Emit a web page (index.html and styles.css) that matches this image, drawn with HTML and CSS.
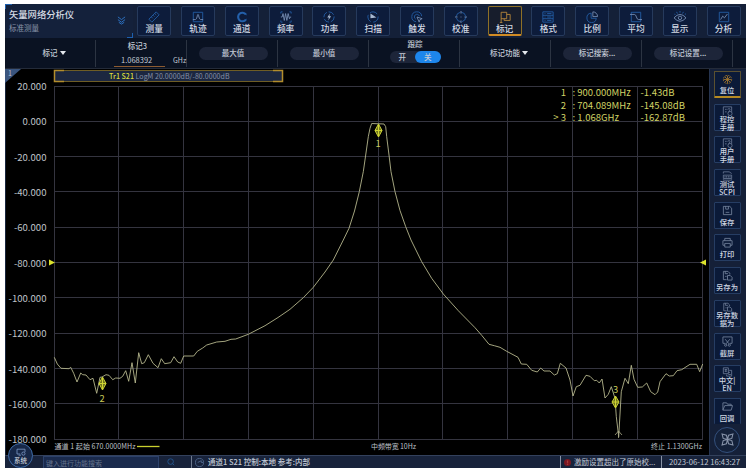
FILE: index.html
```html
<!DOCTYPE html>
<html lang="zh-CN">
<head>
    <meta charset="UTF-8">
    <meta name="viewport" content="width=device-width, initial-scale=1.0">
    <title>矢量网络分析仪</title>
    <link rel="stylesheet" href="styles.css">
</head>
<body>
    <div class="screen">
        <!-- Main menu -->
        <header class="top-bar">
            <div class="app-title">
                <div class="title-text">
                    <h1>矢量网络分析仪</h1>
                    <p>标准测量</p>
                </div>
                <svg class="chevrons" viewBox="0 0 10 10"><path d="M1 1l4 3 4-3M1 4l4 3 4-3M2 7l3 2 3-2"/></svg>
            </div>
            <nav class="menu">
                <button class="menu-btn"><svg viewBox="0 0 14 14"><path d="M1 9.500L9.500 1l3.500 3.500L4.500 13zM4 7l1.500 1.500M6 5l1.500 1.500M8 3l1.500 1.500"/></svg>测量</button>
                <button class="menu-btn"><svg viewBox="0 0 14 14"><path d="M1.500 1.500h11v11h-11z"/><path class="light" d="M1 10h3c2 0 2-6 3-6s1 6 3 6h3"/></svg>轨迹</button>
                <button class="menu-btn"><svg viewBox="0 0 14 14"><path class="thick" d="M11.500 4A5 5 0 1 0 11.500 10"/><path d="M9.500 2.500l3 2M9.500 11.500l3-2"/></svg>通道</button>
                <button class="menu-btn"><svg viewBox="0 0 14 14"><path d="M1 3V1h2M11 1h2v2M13 11v2h-2M3 13H1v-2"/><path class="light" d="M1 7h1.500l1-4 1.500 8 1.500-8L8 11l1.500-8 1.500 6 1-2h1"/></svg>频率</button>
                <button class="menu-btn"><svg viewBox="0 0 14 14"><circle cx="7" cy="7" r="6" stroke-dasharray="7 2"/><path class="solid" d="M8 3L5 7.500h2L6 11l3.500-5H7.500z"/></svg>功率</button>
                <button class="menu-btn"><svg viewBox="0 0 14 14"><circle cx="7" cy="7" r="6" stroke-dasharray="9 3"/><path class="solid" d="M4 3l7 4.500-7 1z"/></svg>扫描</button>
                <button class="menu-btn"><svg viewBox="0 0 14 14"><path d="M6 12.500A5.800 5.800 0 1 1 12.500 6M5.500 9.500A3 3 0 1 1 9.800 6"/><path class="light" d="M7 7l6 2-2.500 1L9.500 13z"/></svg>触发</button>
                <button class="menu-btn"><svg viewBox="0 0 14 14"><circle cx="7" cy="7" r="5.500" stroke-dasharray="7 1.600"/><path class="light" d="M7 0v3M7 11v3M0 7h3M11 7h3M6.500 7h1"/></svg>校准</button>
                <button class="menu-btn active"><svg viewBox="0 0 14 14"><path d="M1 13.500h3M2.500 13.500V1.500H9V9H2.500M9 4h4v7H6V9"/></svg>标记</button>
                <button class="menu-btn"><svg viewBox="0 0 14 14"><path d="M1 1h12v12H1zM1 5h12M1 9h12M3 3h1M6 3h5M3 7h1M6 7h5M3 11h1M6 11h5"/></svg>格式</button>
                <button class="menu-btn"><svg viewBox="0 0 14 14"><path d="M6 2.500A5.500 5.500 0 1 0 12 8.500H6z"/><path class="light" d="M8 1v5.500h5.500A5.500 5.500 0 0 0 8 1z"/></svg>比例</button>
                <button class="menu-btn"><svg viewBox="0 0 14 14"><path d="M1.500 1.500h11v11h-11z"/><path class="light" d="M0 4h5c3 0 2 6 5 6h4"/></svg>平均</button>
                <button class="menu-btn"><svg viewBox="0 0 14 14"><path class="light" d="M0 8q7-8 14 0-7 8-14 0z"/><circle class="light" cx="7" cy="8" r="2"/><path d="M7 0v2M3 1l1 2M11 1l-1 2M0 3l1.500 1.500M14 3l-1.500 1.500"/></svg>显示</button>
                <button class="menu-btn"><svg viewBox="0 0 14 14"><path d="M1.500 1.500h11v11h-11z"/><path class="light" d="M3 10l2.500-4 2 2L11 3.500"/></svg>分析</button>
            </nav>
        </header>

        <!-- Marker toolbar -->
        <section class="tool-bar">
            <div class="tool"><span>标记<i class="caret"></i></span></div>
            <div class="tool field">
                <label>标记3</label>
                <div class="value"><b>1.068392</b><em>GHz</em></div>
            </div>
            <div class="tool"><button class="pill">最大值</button></div>
            <div class="tool"><button class="pill">最小值</button></div>
            <div class="tool track">
                <label>跟踪</label>
                <div class="switch"><span>开</span><span class="on">关</span></div>
            </div>
            <div class="tool function"><span>标记功能<i class="caret"></i></span></div>
            <div class="tool"><button class="pill">标记搜索...</button></div>
            <div class="tool"><button class="pill">标记设置...</button></div>
        </section>

        <main class="content">
            <div class="plot">
                <svg class="chart" viewBox="5 69 704 386">
                    <!-- Channel corner -->
                    <path d="M5 69h16L5 83z" fill="#3a557f"/>
                    <text class="corner" x="8" y="76">1</text>

                    <!-- Trace header -->
                    <rect x="54.500" y="70.500" width="228" height="11" fill="#1c2740" stroke="#6e5d25"/>
                    <path d="M64 70.500h-9.500v11H64M273 70.500h9.500v11H273" fill="none" stroke="#b28d2c" stroke-width="1.500"/>
                    <text class="trace-name" x="109" y="79" textLength="120.500"><tspan fill="#d9dc3c" font-weight="500">Tr1 S21</tspan> LogM 20.0000dB/-80.0000dB</text>

                    <!-- Grid -->
                    <path class="grid" d="M54.500 86V439.500M118.500 86V439.500M183.500 86V439.500M248.500 86V439.500M313.500 86V439.500M378.500 86V439.500M442.500 86V439.500M507.500 86V439.500M572.500 86V439.500M637.500 86V439.500M702.500 86V439.500"/>
                    <path class="grid" d="M54 86.500H703M54 121.500H703M54 156.500H703M54 191.500H703M54 227.500H703M54 262.500H703M54 297.500H703M54 333.500H703M54 368.500H703M54 403.500H703M54 439.500H703"/>

                    <g class="axis">
                        <text x="46.500" y="90">20.000</text>
                        <text x="46.500" y="125.300">0.000</text>
                        <text x="46.500" y="160.600">-20.000</text>
                        <text x="46.500" y="195.900">-40.000</text>
                        <text x="46.500" y="231.300">-60.000</text>
                        <text x="46.500" y="266.600">-80.000</text>
                        <text x="46.500" y="301.900">-100.000</text>
                        <text x="46.500" y="337.200">-120.000</text>
                        <text x="46.500" y="372.500">-140.000</text>
                        <text x="46.500" y="407.900">-160.000</text>
                        <text x="46.500" y="443.200">-180.000</text>
                    </g>

                    <!-- Reference level -->
                    <path class="ref" d="M49 259.500v6l6-3zM706 259.500v6l-6-3z"/>

                    <polyline class="trace" points="54.3,357.3 57.3,364 61,368.3 69,368.7 70.7,367.3 73.7,373.3 77,382 80.7,373 82.700,374.7 86,375 90,379.7 93,378.3 96.700,393.3 100,377.3 102,377 106,374.7 109,375.3 112.7,379.7 115.7,378 120,378.3 122.7,376.3 125.7,370.7 128.7,381.3 132,362.7 135.3,383 138.7,352.7 141.7,363.7 144.3,362.7 148.3,354.7 153,363.3 158,367.7 161.3,358.7 164.7,363.7 170.7,362.7 174,356.7 177.7,362 180.7,363.3 183.7,356 193.7,356 197.3,351.3 202.7,348 206.7,345 216.7,342 225,341.3 231,339.3 235.7,339 248.3,334.3 265,325.7 278,317.5 290,309.3 303.3,297.7 313.3,287.3 325,272 333.3,260 343.3,240 349,228.3 354.5,211 359.3,191.7 363.3,171.7 365.7,155 368.3,136.7 370,128.3 371.7,123.5 384,124 385.7,126.7 386.7,136.7 389,155 391,171.7 395,191.7 400,210.5 405.7,226.7 411,240 421.7,261.7 431.7,278.3 443.3,294 458.3,310.7 475,327.7 481.7,335.3 489,344.3 494.3,345.7 500,347.3 506.7,351.3 518,357.3 521.3,364 526.7,364.3 531.7,370.3 537.3,372 540.7,368 544,371 550,371 554.3,375 557.3,373.7 560.3,363.3 566,368 570,380 573,396 576.3,386.7 580,385.3 586,375.3 590,376.3 594.3,380.7 596.7,380.3 599.3,383 602,379 605,398 608.3,394.3 611.3,386.7 615,398.3 616.3,416.7 618.7,436.7 621.3,391.7 625,378.3 628.3,383.7 631.3,365.3 634,379.3 637.7,387.3 642.3,387 646.7,383 650.7,391.7 655,394.7 657.7,392 660,381.7 666,373.7 669.3,376 673.3,375.7 677,370.7 681.7,369.7 690,364.3 696.7,364.3 699.7,371.7 702.7,364"/>

                    <!-- Markers -->
                    <g class="marker">
                        <path d="M378.500 124l3.500 6.500-3.500 6.500-3.500-6.500zM375 130.500h7M378.500 124v13"/>
                        <text x="378" y="147">1</text>
                        <path d="M102.500 377l3.500 6.500-3.500 6.500-3.500-6.500zM99 383.500h7M102.500 377v13"/>
                        <text x="102" y="401.500">2</text>
                        <path d="M615.500 396l3.500 6-3.500 6-3.500-6zM612 402h7M615.500 396v12"/>
                        <text x="615.500" y="392.500">3</text>
                    </g>
                    <path d="M615 435l3.500-4 3.500 4M618.500 431v7" fill="none" stroke="#a9a987" stroke-width=".8"/>

                    <g class="readout">
                        <text x="566" y="96" text-anchor="end">1</text>
                        <text x="572.500" y="96">: 900.000MHz</text>
                        <text x="640.500" y="96">-1.43dB</text>
                        <text x="566" y="108.500" text-anchor="end">2</text>
                        <text x="572.500" y="108.500">: 704.089MHz</text>
                        <text x="640.500" y="108.500">-145.08dB</text>
                        <text x="566" y="120.800" text-anchor="end">&gt; 3</text>
                        <text x="572.500" y="120.800">: 1.068GHz</text>
                        <text x="640.500" y="120.800">-162.87dB</text>
                    </g>

                    <g class="sweep">
                        <text x="54.500" y="449.300" textLength="81">通道 1 起始 670.0000MHz</text>
                        <path d="M137 446.500h22.500" stroke="#c9cf2e" stroke-width="1.300"/>
                        <text x="371" y="449.300" textLength="45">中频带宽 10Hz</text>
                        <text x="651" y="449.300" textLength="51">终止 1.1300GHz</text>
                    </g>
                </svg>
            </div>

            <aside class="side-bar">
                <button class="side-btn active"><svg viewBox="0 0 12 12"><circle cx="6" cy="6" r="4.500" stroke-dasharray="2 1"/><path d="M6 2v8M2 6h8M3 3l6 6M9 3L3 9"/></svg><span>复位</span></button>
                <button class="side-btn two"><svg viewBox="0 0 12 12"><path d="M1 11V1h10v6M3 4h2M3 7h2M6 4q3-2 3 0t-2 3"/><circle cx="9" cy="9" r="2.500"/></svg><span>程控<br>手册</span></button>
                <button class="side-btn two"><svg viewBox="0 0 12 12"><path d="M1 11V1h10v6M3 4h2M3 7h2M6 4q3-2 3 0t-2 3"/><circle cx="9" cy="9" r="2.500"/></svg><span>用户<br>手册</span></button>
                <button class="side-btn two"><svg viewBox="0 0 12 12"><path d="M1 3V1h7l3 2M1 10v1h10v-1M1 5h10v4H1zM3 6v2M5 6v2M7 6v2M9 6v2"/></svg><span>测试<br>SCPI</span></button>
                <button class="side-btn"><svg viewBox="0 0 12 12"><path d="M1.500 1.500h7l2 2v7h-9zM4 1.500v3h3v-3M4 8h4"/></svg><span>保存</span></button>
                <button class="side-btn"><svg viewBox="0 0 12 12"><path d="M3 4V1.500h6V4M3 9H1V4h10v5H9M3 7h6v4H3z"/></svg><span>打印</span></button>
                <button class="side-btn"><svg viewBox="0 0 12 12"><path d="M5 10.500H1.500v-9h5l2 2V5M3.500 1.500V4h3M3.500 7H5M6 6h3l2 2v3H6z"/></svg><span>另存为</span></button>
                <button class="side-btn two"><svg viewBox="0 0 12 12"><path d="M5 10.500H1.500v-9h5l2 2V5M3.500 1.500V4h3M3.500 7H5M6 6h3l2 2v3H6z"/></svg><span>另存数<br>据为</span></button>
                <button class="side-btn"><svg viewBox="0 0 12 12"><path d="M3.500 8H1V1h10v7H8.500M3.500 3.500l4 5M8.500 3.500l-4 5"/><circle cx="4" cy="10" r="1.200"/><circle cx="8" cy="10" r="1.200"/></svg><span>截屏</span></button>
                <button class="side-btn two"><svg viewBox="0 0 12 12"><path d="M1 1h6v7H1zM2.500 3h3M4 3v3M2.500 5h3M8 4h3v7H5V9M7 9h3M7 6.500h2"/></svg><span>中文|<br>EN</span></button>
                <button class="side-btn last"><svg viewBox="0 0 12 12"><path d="M1 10V2h4l1 1.500h4V5M1 10l2-5h8.500L10 10z"/></svg><span>回调</span></button>
                <button class="round-btn"><svg viewBox="0 0 12 12"><path d="M6 6L2 5 1 1l4 1zM6 6l1-4 4-1-1 4zM6 6l4 1 1 4-4-1zM6 6l-1 4-4 1 1-4z"/></svg></button>
            </aside>
        </main>

        <footer class="status-bar">
            <div class="search">键入进行功能搜索</div>
            <svg class="find" viewBox="0 0 10 10"><circle cx="4.500" cy="4.500" r="3.500"/><path d="M7 7l2 2"/></svg>
            <div class="state"><svg class="dial" viewBox="0 0 10 10"><circle cx="5" cy="5" r="4.500"/><path d="M3 5l4-2v2h2"/></svg>通道1 S21 控制:本地 参考:内部</div>
            <div class="alert"><i>!</i>激励设置超出了原始校...</div>
            <div class="clock">2023-06-12 16:43:27</div>
        </footer>
        <button class="system"><svg viewBox="0 0 12 10"><path d="M5 7.500H1v-6h10V5M3 9h3"/><circle cx="9" cy="7" r="2"/></svg>系统</button>
    </div>
</body>
</html>
```
FILE: styles.css
```css
* {
    box-sizing: border-box;
}
body {
    margin: 0;
    padding: 4px 5px 7px;
    background: #ffffff;
    font-family: "Noto Sans CJK SC", "Noto Sans", sans-serif;
    font-size: 7.5px;
    color: #c3cad6;
}
button {
    margin: 0;
    padding: 0;
    border: none;
    background: none;
    color: inherit;
    font: inherit;
}
h1, p {
    margin: 0;
    font-weight: normal;
}
svg {
    display: block;
    fill: none;
}
.screen {
    position: relative;
    display: flex;
    flex-direction: column;
    width: 741px;
    height: 464px;
    background: #080f1e;
    overflow: hidden;
    white-space: nowrap;
}

/* Main menu */
.top-bar {
    display: flex;
    height: 34px;
    background: #142038;
}
.app-title {
    display: flex;
    justify-content: space-between;
    align-items: center;
    width: 128px;
    padding: 0 7px 1px 4px;
    background:
        linear-gradient(#1d5fae, #1d5fae) left top / 7px 1px no-repeat,
        linear-gradient(#1d5fae, #1d5fae) left top / 1px 5px no-repeat,
        linear-gradient(#1d5fae, #1d5fae) right bottom / 6px 1px no-repeat,
        linear-gradient(#1d5fae, #1d5fae) right bottom / 1px 5px no-repeat,
        #14213b;
}
.app-title h1 {
    font-size: 9.3px;
    font-weight: 500;
    line-height: 14px;
    color: #d6dbe4;
}
.app-title p {
    line-height: 14px;
    color: #8a95a9;
}
.chevrons {
    width: 9px;
    height: 9px;
    stroke: #2f78cd;
}
.menu {
    display: flex;
    gap: 9.8px;
    padding: 1.500px 0 0 4.200px;
}
.menu-btn {
    display: flex;
    flex-direction: column;
    align-items: center;
    width: 34px;
    height: 30px;
    padding-top: 4px;
    border: 1px solid #263a5c;
    border-radius: 2px;
    background: #0d1c3b;
    font-size: 8.7px;
    font-weight: 500;
    line-height: 12px;
    color: #d2d9e4;
}
.menu-btn svg {
    flex: none;
    width: 12px;
    height: 12px;
    stroke: #2460aa;
}
.menu-btn .light {
    stroke: #7890b5;
}
.menu-btn .thick {
    stroke-width: 2.5;
}
.menu-btn .solid {
    fill: #a9bad2;
    stroke: none;
}
.menu-btn.active {
    border-color: #8f7126;
    border-bottom: 2px solid #d18b24;
    background: #171d2c;
}
.menu-btn.active svg {
    stroke: #bd8b3c;
}

/* Marker toolbar */
.tool-bar {
    display: flex;
    height: 31px;
    background: #0a1222;
    border-bottom: 1px solid #242b39;
}
.tool {
    display: flex;
    justify-content: center;
    align-items: center;
    width: 91px;
    padding-left: 1px;
    background: linear-gradient(#2c3442, #2c3442) right 2px / 1px 27px no-repeat;
    font-weight: 500;
    line-height: 10px;
}
.tool > span {
    display: flex;
    align-items: center;
    gap: 2px;
}
.tool:first-child, .tool.function {
    padding-left: 7px;
}
.caret {
    border: 3px solid transparent;
    border-top: 4px solid #e4e8ee;
    border-bottom: 0;
}
.field, .track {
    flex-direction: column;
    justify-content: flex-start;
}
.field label {
    margin-top: 3px;
    padding-right: 9px;
}
.value {
    display: flex;
    align-self: stretch;
    padding-left: 17px;
    margin-top: 3px;
    font-weight: normal;
}
.value b {
    width: 51px;
    height: 13px;
    padding-left: 7px;
    border-bottom: 1px solid #8d5b30;
    font-weight: normal;
    line-height: 12px;
}
.value em {
    margin-left: 8px;
    font-style: normal;
    font-size: 7px;
    line-height: 12px;
}
.pill {
    width: 69px;
    height: 13px;
    border-radius: 7px;
    background: #1d2539;
    line-height: 12px;
}
.track label {
    margin-top: 1px;
}
.switch {
    display: flex;
    width: 51px;
    height: 12px;
    margin-top: 2px;
    border-radius: 6px;
    background: #1d2539;
    text-align: center;
    line-height: 12px;
}
.switch span {
    flex: 1;
    border-radius: 6px;
}
.switch .on {
    background: #1d86ec;
}

/* Plot area */
.content {
    display: flex;
    height: 386px;
}
.plot {
    width: 704px;
    background: #000000;
    border-left: 1px solid #17243c;
}
.chart {
    width: 704px;
    height: 386px;
    margin-left: -1px;
}
.chart text {
    fill: #bfc2c8;
}
.grid {
    stroke: #34343f;
    stroke-width: 1;
}
.axis text {
    font-size: 9.6px;
    text-anchor: end;
}
.chart .corner {
    font-size: 7px;
}
.chart .trace-name {
    font-size: 7px;
    fill: #8691a8;
}
.ref {
    fill: #dce32d;
}
.trace {
    stroke: #b4b58c;
    stroke-width: .9;
}
.marker path {
    fill: #70741e;
    stroke: #cdd334;
    stroke-width: 1;
}
.chart .marker text {
    font-size: 9.3px;
    text-anchor: middle;
    fill: #c8cb58;
}
.chart .readout text {
    font-size: 9.5px;
    fill: #d0d366;
}
.sweep text {
    font-size: 7px;
}

/* Right side shortcuts */
.side-bar {
    display: flex;
    flex-direction: column;
    align-items: center;
    gap: 5.7px;
    width: 37px;
    padding: 2px 2px 0 0;
    border-left: 1px solid #26344f;
    background: #152038;
}
.side-btn {
    display: flex;
    flex: none;
    flex-direction: column;
    align-items: center;
    width: 27px;
    height: 27px;
    padding-top: 2px;
    border: 1px solid #263d63;
    border-radius: 1px;
    background: #0b1a38;
    font-size: 7.3px;
    font-weight: 500;
    line-height: 8px;
    color: #d0d7e2;
}
.side-btn svg {
    flex: none;
    width: 11px;
    height: 11px;
    margin-bottom: 2px;
    stroke: #75849e;
    stroke-width: .9;
}
.side-btn.two {
    padding-top: 1px;
}
.side-btn.two svg {
    height: 10px;
    margin-bottom: -1px;
}
.side-btn.active {
    border-color: #5b5130;
    border-bottom: 2px solid #b68a22;
}
.side-btn.active svg {
    margin-bottom: 1px;
    stroke: #a87a2a;
}
.side-btn.last {
    height: 26px;
    border-bottom: none;
}
.round-btn {
    display: flex;
    flex: none;
    justify-content: center;
    align-items: center;
    width: 26px;
    height: 26px;
    margin-top: -3px;
    border: 1px solid #33507d;
    border-radius: 50%;
    background: #14213a;
}
.round-btn svg {
    width: 13px;
    height: 13px;
    stroke: #8793a9;
}

/* Status bar */
.status-bar {
    display: flex;
    align-items: center;
    height: 13px;
    background: #18233b;
    border-top: 1px solid #33415c;
    line-height: 12px;
}
.search {
    width: 116px;
    height: 12px;
    margin-left: 38px;
    padding-left: 2px;
    border: 1px solid #2c416a;
    border-bottom: none;
    background: #1a2a4c;
    font-size: 7px;
    color: #65738d;
}
.find {
    width: 8px;
    height: 8px;
    margin-left: 8px;
    stroke: #245c97;
}
.state {
    display: flex;
    align-items: center;
    gap: 4px;
    margin-left: 16px;
    padding-left: 3px;
    border-left: 1px solid #6f7b8f;
    font-weight: 500;
}
.dial {
    width: 9px;
    height: 9px;
    stroke: #4f668c;
}
.alert {
    display: flex;
    align-items: center;
    gap: 3px;
    width: 101px;
    margin-left: auto;
    padding-left: 3px;
    border-left: 1px solid #8993a5;
}
.alert i {
    width: 7px;
    height: 7px;
    border-radius: 50%;
    background: #7b1720;
    color: #e06a6a;
    font-size: 6px;
    font-style: normal;
    line-height: 7px;
    text-align: center;
}
.clock {
    width: 85px;
    padding-left: 7px;
    border-left: 1px solid #8993a5;
    font-size: 7.7px;
}
.system {
    position: absolute;
    left: 3px;
    bottom: 0;
    display: flex;
    flex-direction: column;
    align-items: center;
    width: 25px;
    height: 25px;
    padding-top: 4px;
    border: 1px solid #3f6ca8;
    border-radius: 50%;
    background: #172848;
    font-size: 6.5px;
    font-weight: 500;
    line-height: 9px;
}
.system svg {
    flex: none;
    width: 10px;
    height: 8px;
    stroke: #7f9bc8;
}
```
